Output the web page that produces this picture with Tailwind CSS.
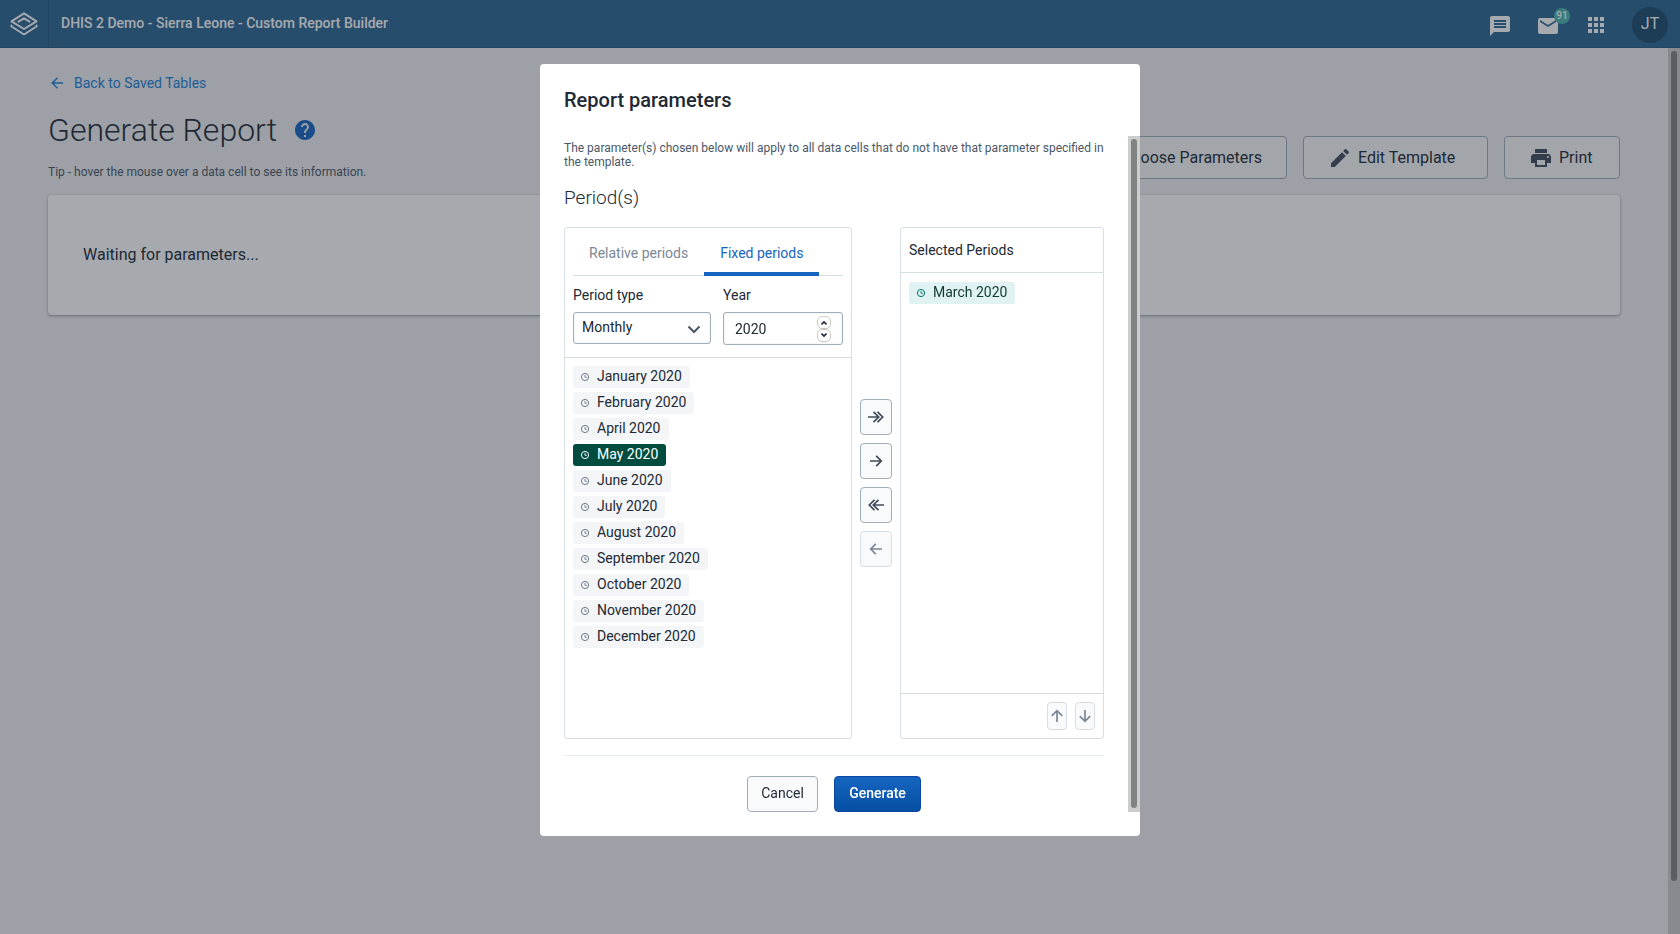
<!DOCTYPE html>
<html lang="en">
<head>
<meta charset="utf-8">
<meta name="viewport" content="width=device-width, initial-scale=1">
<title>Custom Report Builder</title>
<script src="https://cdn.jsdelivr.net/npm/@tailwindcss/browser@4"></script>
</head>
<body class="flex h-screen flex-col overflow-hidden bg-[#f0f1f2] font-[Roboto,sans-serif] text-sm text-[#212934]">

<svg class="hidden" aria-hidden="true">
  <symbol id="clock" viewBox="0 0 10 10"><circle cx="5" cy="5" r="3.6" fill="none" stroke="currentColor"/><path d="M5 3v2.3h1.8" fill="none" stroke="currentColor" stroke-width=".9"/></symbol>
  <symbol id="right" viewBox="0 0 16 16"><path d="M2 8h11M8.200 2.800 13.300 8l-5.100 5.200" fill="none" stroke="currentColor" stroke-width="1.7"/></symbol>
  <symbol id="right-all" viewBox="0 0 16 16"><path d="M0 8h11M5.500 2.800 10.700 8l-5.200 5.200M9.500 2.800 14.700 8l-5.200 5.200" fill="none" stroke="currentColor" stroke-width="1.700"/></symbol>
</svg>

<header class="flex h-12 shrink-0 items-center border-b border-[#265a82] bg-[#2c6693] text-white">
  <a href="#" aria-label="Home" class="flex h-full w-[49px] items-center justify-center border-r border-[#265a82]">
    <svg class="h-6 w-7" viewBox="0 0 28 24" fill="none" stroke="currentColor" stroke-width="2" stroke-linejoin="round" stroke-linecap="round"><path d="M14 1.300 26.500 9.300 14 17 1.500 9.300z"/><path d="M8.500 9.600 14 6.300l5.500 3.300"/><path d="M1.500 13.500v1L14 22.500l12.500-8v-1"/></svg>
  </a>
  <h1 class="flex-1 pl-3 pb-px font-medium">DHIS 2 Demo - Sierra Leone - Custom Report Builder</h1>
  <nav class="flex items-center gap-6 pr-3" aria-label="Header">
    <a href="#" aria-label="Interpretations" class="mt-[5px]"><svg class="size-6" viewBox="0 0 24 24" fill="currentColor"><path d="M20 2H4c-1.100 0-2 .9-2 2v18l4-4h14c1.100 0 2-.9 2-2V4c0-1.100-.9-2-2-2zm-2 12H6v-2h12v2zm0-3H6V9h12v2zm0-3H6V6h12v2z"/></svg></a>
    <a href="#" aria-label="Messages" class="relative mt-[5px]"><svg class="size-6" viewBox="0 0 24 24" fill="currentColor"><path d="M20 4H4c-1.100 0-2 .9-2 2v12c0 1.100.9 2 2 2h16c1.100 0 2-.9 2-2V6c0-1.100-.9-2-2-2zm0 4-8 5-8-5V6l8 5 8-5v2z"/></svg><span class="absolute -top-1.5 left-[18px] flex h-4 min-w-4 items-center justify-center rounded-full bg-[#4db6ac] text-[10px] font-medium">91</span></a>
    <button type="button" aria-label="Apps" class="mt-[3px]"><svg class="size-6" viewBox="0 0 24 24" fill="currentColor"><path d="M4 8h4V4H4zm6 12h4v-4h-4zm-6 0h4v-4H4zm0-6h4v-4H4zm6 0h4v-4h-4zm6-10v4h4V4zm-6 4h4V4h-4zm6 6h4v-4h-4zm0 6h4v-4h-4z"/></svg></button>
    <button type="button" aria-label="Profile" class="mt-[3px] flex size-9 items-center justify-center rounded-full bg-[#1c4a6b] pb-0.5 text-base">JT</button>
  </nav>
</header>

<div class="flex min-h-0 flex-1">
  <main class="flex-1 px-12 pt-6">
    <a href="#" class="flex h-5 items-center gap-[11px] pt-0.5 text-[#2080d8]"><svg class="ml-[3px] size-3" viewBox="0 0 12 12" fill="none" stroke="currentColor" stroke-width="1.500"><path d="M12 6H1.200M6.500.8 1.200 6l5.300 5.200"/></svg>Back to Saved Tables</a>
    <div class="flex justify-between">
      <div>
        <h2 class="flex items-center gap-5 pt-4 text-[32px]/[44px] font-light">Generate Report
          <button type="button" aria-label="Help" class="text-[#1565c0]"><svg class="-ml-1 -mr-0.5 size-6" viewBox="0 0 24 24" fill="currentColor"><path d="M12 2C6.480 2 2 6.480 2 12s4.480 10 10 10 10-4.480 10-10S17.520 2 12 2zm1 17h-2v-2h2v2zm2.070-7.750-.9.920C13.450 12.900 13 13.500 13 15h-2v-.5c0-1.100.45-2.100 1.170-2.830l1.240-1.260c.37-.36.590-.86.590-1.410 0-1.100-.9-2-2-2s-2 .9-2 2H8c0-2.210 1.790-4 4-4s4 1.790 4 4c0 .88-.36 1.680-.93 2.250z"/></svg></button>
        </h2>
        <p class="pt-3 text-xs text-[#4a5768]">Tip - hover the mouse over a data cell to see its information.</p>
      </div>
      <div class="flex items-start gap-4 pt-11 text-base">
        <button type="button" class="flex h-[43px] min-w-[215px] items-center gap-1.5 rounded border border-[#a0adba] bg-[#f9fafb] px-6"><svg class="size-6" viewBox="0 0 24 24" fill="#404b5a"><path d="M3 17v2h6v-2H3zM3 5v2h10V5H3zm10 16v-2h8v-2h-8v-2h-2v6h2zM7 9v2H3v2h4v2h2V9H7zm14 4v-2H11v2h10zm-6-4h2V7h4V5h-4V3h-2v6z"/></svg>Choose Parameters</button>
        <button type="button" class="flex h-[43px] min-w-[185px] items-center gap-1.5 rounded border border-[#a0adba] bg-[#f9fafb] px-6"><svg class="size-6" viewBox="0 0 24 24" fill="#404b5a"><path d="M3 17.250V21h3.750L17.810 9.940l-3.750-3.750L3 17.250zM20.710 7.040a1 1 0 0 0 0-1.410l-2.340-2.340a1 1 0 0 0-1.410 0l-1.830 1.830 3.750 3.750 1.830-1.830z"/></svg>Edit Template</button>
        <button type="button" class="flex h-[43px] min-w-[116px] items-center gap-1.5 rounded border border-[#a0adba] bg-[#f9fafb] px-6"><svg class="size-6" viewBox="0 0 24 24" fill="#404b5a"><path d="M19 8H5c-1.660 0-3 1.340-3 3v6h4v4h12v-4h4v-6c0-1.660-1.340-3-3-3zm-3 11H8v-5h8v5zm3-7c-.55 0-1-.45-1-1s.45-1 1-1 1 .45 1 1-.45 1-1 1zm-1-9H6v4h12V3z"/></svg>Print</button>
      </div>
    </div>
    <section class="mt-[15px] flex h-[120px] items-center rounded bg-white px-[35px] text-base shadow-[0_1px_3px_rgba(33,41,52,0.45)]">Waiting for parameters...</section>
  </main>
  <div class="w-3 bg-[#cccccc] px-[3px] pt-[3px]" aria-hidden="true"><div class="h-[94%] rounded-full bg-[#808080]"></div></div>
</div>

<div class="fixed inset-0 flex items-start justify-center bg-[#212934]/40 pt-16">
  <div role="dialog" aria-modal="true" aria-labelledby="dialog-title" class="w-[600px] rounded bg-white pb-6">
    <h2 id="dialog-title" class="px-6 pt-6 pb-6 text-xl/6 font-medium">Report parameters</h2>
    <div class="flex">
      <form class="flex-1 pr-6 pl-6">
        <p class="pt-[5px] text-xs/[14px] text-[#4a5768]">The parameter(s) chosen below will apply to all data cells that do not have that parameter specified in the template.</p>
        <h3 class="pt-[17px] pb-[17px] text-[19px]/6 font-light">Period(s)</h3>
        <div class="flex h-[512px] gap-2">
          <section class="w-[288px] rounded-[3px] border border-[#d5dde5]">
            <div class="border-b border-[#d5dde5] px-2 pb-3">
              <div role="tablist" class="flex h-12 border-b border-[#d5dde5]">
                <button type="button" role="tab" aria-selected="false" class="h-12 px-4 pt-0.5 text-[#7b8794]">Relative periods</button>
                <button type="button" role="tab" aria-selected="true" class="h-12 border-b-4 border-[#1565c0] px-4 pt-1.5 text-[#1565c0]">Fixed periods</button>
              </div>
              <div class="flex gap-3 pt-2">
                <div class="w-[138px]">
                  <label for="type" class="block h-7 pt-px">Period type</label>
                  <div class="relative">
                    <select id="type" class="block h-8 w-full appearance-none rounded-[3px] border border-[#a0adba] bg-white px-2 pb-0.5 shadow-[inset_0_0_2px_rgba(48,54,60,0.15)]"><option>Monthly</option></select>
                    <svg class="pointer-events-none absolute top-[11px] right-2.5 size-3.5" viewBox="0 0 14 14" fill="none" stroke="#4a5768" stroke-width="2"><path d="M1.500 3.500 7 9l5.500-5.500"/></svg>
                  </div>
                </div>
                <div class="flex-1">
                  <label for="year" class="block h-7 pt-px">Year</label>
                  <div class="relative">
                    <input id="year" type="text" inputmode="numeric" value="2020" class="block h-[33px] w-full rounded-[3px] border border-[#a0adba] px-[11px] shadow-[inset_0_0_2px_rgba(48,54,60,0.15)]">
                    <div class="absolute top-1 right-3 flex flex-col">
                      <button type="button" aria-label="Increase year" class="flex h-[13px] w-3.5 items-center justify-center rounded-[5px] border border-[#cdc7c2]"><svg class="size-1.5" viewBox="0 0 6 6" fill="none" stroke="#212934" stroke-width="1.600"><path d="M.5 4.500 3 2l2.500 2.500"/></svg></button>
                      <button type="button" aria-label="Decrease year" class="flex h-[13px] w-3.5 items-center justify-center rounded-[5px] border border-[#cdc7c2] pb-0.5"><svg class="size-1.5" viewBox="0 0 6 6" fill="none" stroke="#212934" stroke-width="1.600"><path d="M.5 1.500 3 4l2.500-2.500"/></svg></button>
                    </div>
                  </div>
                </div>
              </div>
            </div>
            <ul class="flex flex-col items-start gap-1 p-2">
              <li><button type="button" class="flex h-[22px] items-center gap-1.5 rounded-[3px] bg-[#f3f5f7] px-[7px] pr-2"><svg class="size-2.5 text-[#6e7a8a]"><use href="#clock"/></svg><span class="pb-0.5 pl-px">January 2020</span></button></li>
              <li><button type="button" class="flex h-[22px] items-center gap-1.5 rounded-[3px] bg-[#f3f5f7] px-[7px] pr-2"><svg class="size-2.5 text-[#6e7a8a]"><use href="#clock"/></svg><span class="pb-0.5 pl-px">February 2020</span></button></li>
              <li><button type="button" class="flex h-[22px] items-center gap-1.5 rounded-[3px] bg-[#f3f5f7] px-[7px] pr-2"><svg class="size-2.5 text-[#6e7a8a]"><use href="#clock"/></svg><span class="pb-0.5 pl-px">April 2020</span></button></li>
              <li><button type="button" aria-pressed="true" class="flex h-[22px] items-center gap-1.5 rounded-[3px] bg-[#004d40] px-[7px] pr-2 text-white"><svg class="size-2.5"><use href="#clock"/></svg><span class="pb-0.5 pl-px">May 2020</span></button></li>
              <li><button type="button" class="flex h-[22px] items-center gap-1.5 rounded-[3px] bg-[#f3f5f7] px-[7px] pr-2"><svg class="size-2.5 text-[#6e7a8a]"><use href="#clock"/></svg><span class="pb-0.5 pl-px">June 2020</span></button></li>
              <li><button type="button" class="flex h-[22px] items-center gap-1.5 rounded-[3px] bg-[#f3f5f7] px-[7px] pr-2"><svg class="size-2.5 text-[#6e7a8a]"><use href="#clock"/></svg><span class="pb-0.5 pl-px">July 2020</span></button></li>
              <li><button type="button" class="flex h-[22px] items-center gap-1.5 rounded-[3px] bg-[#f3f5f7] px-[7px] pr-2"><svg class="size-2.5 text-[#6e7a8a]"><use href="#clock"/></svg><span class="pb-0.5 pl-px">August 2020</span></button></li>
              <li><button type="button" class="flex h-[22px] items-center gap-1.5 rounded-[3px] bg-[#f3f5f7] px-[7px] pr-2"><svg class="size-2.5 text-[#6e7a8a]"><use href="#clock"/></svg><span class="pb-0.5 pl-px">September 2020</span></button></li>
              <li><button type="button" class="flex h-[22px] items-center gap-1.5 rounded-[3px] bg-[#f3f5f7] px-[7px] pr-2"><svg class="size-2.5 text-[#6e7a8a]"><use href="#clock"/></svg><span class="pb-0.5 pl-px">October 2020</span></button></li>
              <li><button type="button" class="flex h-[22px] items-center gap-1.5 rounded-[3px] bg-[#f3f5f7] px-[7px] pr-2"><svg class="size-2.5 text-[#6e7a8a]"><use href="#clock"/></svg><span class="pb-0.5 pl-px">November 2020</span></button></li>
              <li><button type="button" class="flex h-[22px] items-center gap-1.5 rounded-[3px] bg-[#f3f5f7] px-[7px] pr-2"><svg class="size-2.5 text-[#6e7a8a]"><use href="#clock"/></svg><span class="pb-0.5 pl-px">December 2020</span></button></li>
            </ul>
          </section>
          <div class="flex flex-col justify-center gap-2 text-[#404b5a]">
            <button type="button" aria-label="Select all" class="flex h-9 w-8 items-center justify-center rounded border border-[#a0adba] bg-[#f9fafb]"><svg class="size-4"><use href="#right-all"/></svg></button>
            <button type="button" aria-label="Select" class="flex h-9 w-8 items-center justify-center rounded border border-[#a0adba] bg-[#f9fafb]"><svg class="size-4"><use href="#right"/></svg></button>
            <button type="button" aria-label="Deselect all" class="flex h-9 w-8 items-center justify-center rounded border border-[#a0adba] bg-[#f9fafb]"><svg class="size-4 rotate-180"><use href="#right-all"/></svg></button>
            <button type="button" aria-label="Deselect" disabled class="flex h-9 w-8 items-center justify-center rounded border border-[#d5dde5] bg-[#f9fafb] text-[#7b8794]"><svg class="size-4 rotate-180"><use href="#right"/></svg></button>
          </div>
          <section class="flex flex-1 flex-col rounded-[3px] border border-[#d5dde5]">
            <h4 class="flex h-[45px] items-center border-b border-[#d5dde5] px-2">Selected Periods</h4>
            <ul class="flex flex-1 flex-col items-start px-2 pt-[9px]">
              <li><button type="button" class="flex h-[22px] items-center gap-1.5 rounded-[3px] bg-[#e0f2f1] px-[7px] pr-2 text-[#103a33]"><svg class="size-2.5 text-[#00796b]"><use href="#clock"/></svg><span class="pb-0.5 pl-px">March 2020</span></button></li>
            </ul>
            <div class="flex justify-end gap-2 border-t border-[#d5dde5] p-2 text-[#7b8794]">
              <button type="button" aria-label="Move up" disabled class="flex h-7 w-5 items-center justify-center rounded border border-[#d5dde5] bg-[#f9fafb]"><svg class="size-4 -rotate-90"><use href="#right"/></svg></button>
              <button type="button" aria-label="Move down" disabled class="flex h-7 w-5 items-center justify-center rounded border border-[#d5dde5] bg-[#f9fafb]"><svg class="size-4 rotate-90"><use href="#right"/></svg></button>
            </div>
          </section>
        </div>
        <div class="mt-4 flex justify-center gap-4 border-t border-[#e8edf2] pt-5">
          <button type="button" class="h-9 min-w-[71px] rounded border border-[#a0adba] bg-[#f9fafb] pb-0.5">Cancel</button>
          <button type="submit" class="h-9 min-w-[87px] rounded border border-[#0d47a1] bg-linear-to-b from-[#1565c0] to-[#0650a3] pb-0.5 font-medium text-white">Generate</button>
        </div>
      </form>
      <div class="w-3 bg-[#cdcdcd] px-[3px] pt-[3px] pb-1" aria-hidden="true"><div class="h-full rounded-full bg-[#808383]"></div></div>
    </div>
  </div>
</div>
</body>
</html>
